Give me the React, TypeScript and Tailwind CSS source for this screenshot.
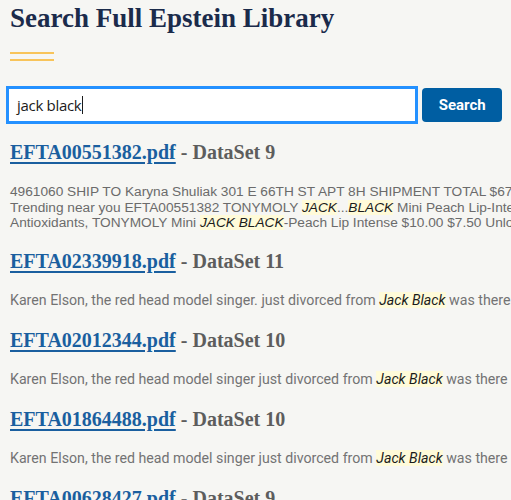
import React from 'react'

type Part = string | { hl: string }

const RESULTS: { file: string; dataset: string; lines: Part[][]; alt?: boolean }[] = [
  {
    file: 'EFTA00551382.pdf',
    dataset: 'DataSet 9',
    alt: true,
    lines: [
      ['4961060 SHIP TO Karyna Shuliak 301 E 66TH ST APT 8H SHIPMENT TOTAL $67.50 Subtotal'],
      ['Trending near you EFTA00551382 TONYMOLY ', { hl: 'JACK' }, '...', { hl: 'BLACK' }, ' Mini Peach Lip-Intense Care Lip'],
      ['Antioxidants, TONYMOLY Mini ', { hl: 'JACK BLACK' }, '-Peach Lip Intense $10.00 $7.50 Unlock Deal'],
    ],
  },
  {
    file: 'EFTA02339918.pdf',
    dataset: 'DataSet 11',
    lines: [['Karen Elson, the red head model singer. just divorced from ', { hl: 'Jack Black' }, ' was there on the night']],
  },
  {
    file: 'EFTA02012344.pdf',
    dataset: 'DataSet 10',
    lines: [['Karen Elson, the red head model singer just divorced from ', { hl: 'Jack Black' }, ' was there on the night']],
  },
  {
    file: 'EFTA01864488.pdf',
    dataset: 'DataSet 10',
    lines: [['Karen Elson, the red head model singer just divorced from ', { hl: 'Jack Black' }, ' was there on the night']],
  },
  {
    file: 'EFTA00628427.pdf',
    dataset: 'DataSet 9',
    lines: [],
  },
]

export default function App() {
  return (
    <div className="h-[500px] w-[511px] overflow-hidden bg-[#f6f6f3] px-[9px]">
      <h1 className="pl-px pt-[1px] text-[27px] font-bold leading-[34px] text-[#1b2b4b] [font-family:'Liberation_Serif',serif]">
        Search Full Epstein Library
      </h1>

      {/* gold divider */}
      <div className="mt-[17px] ml-px flex w-[44px] flex-col gap-[5px]">
        <div className="h-[2px] bg-[#f8c45a]" />
        <div className="h-[2px] bg-[#f8c45a]" />
      </div>

      {/* search bar */}
      <div className="mt-[26px] flex items-start gap-[7px]">
        <div className="mt-[2px] flex h-[32px] w-[408px] items-center bg-white pl-[8px] outline outline-[3px] outline-[#2491ff]">
          <span className="text-[15px] tracking-[-0.3px] text-[#1b1b1b] [font-family:'Open_Sans',sans-serif]">jack black</span>
          <span className="ml-px h-[18px] w-px bg-[#1b1b1b]" />
        </div>
        <button className="mt-px h-[34px] w-[80px] rounded-[4px] bg-[#005ea2] text-[15px] font-bold text-white [font-family:'Roboto',sans-serif]">
          Search
        </button>
      </div>

      <div className="mt-[18px] flex flex-col gap-[18px]">
        {RESULTS.map((r) => (
          <div key={r.file} className="flex flex-col gap-[17px]">
            <div className="pl-px whitespace-nowrap text-[20px] font-bold leading-[24px] [font-family:'Liberation_Serif',serif]">
              <a href="#" className="text-[#1a5f9f] underline decoration-[2px] underline-offset-[3px]">
                {r.file}
              </a>
              <span className="text-[#5d5d5d]"> - {r.dataset}</span>
            </div>
            {r.lines.length > 0 && (
              <div
                className={
                  r.alt
                    ? "mt-[3px] pl-px text-[13.7px] leading-[15.5px] text-[#6b6b6b] [font-family:'Liberation_Sans',sans-serif]"
                    : "pl-px text-[14.2px] leading-[20px] text-[#737373] [font-family:'Roboto',sans-serif]"
                }
              >
                {r.lines.map((line, i) => (
                  <div key={i} className="whitespace-nowrap">
                    {line.map((p, j) =>
                      typeof p === 'string' ? (
                        <span key={j}>{p}</span>
                      ) : (
                        <mark key={j} className="bg-[#fffbd9] italic text-[#1b1b1b]">
                          {p.hl}
                        </mark>
                      )
                    )}
                  </div>
                ))}
              </div>
            )}
          </div>
        ))}
      </div>
    </div>
  )
}
